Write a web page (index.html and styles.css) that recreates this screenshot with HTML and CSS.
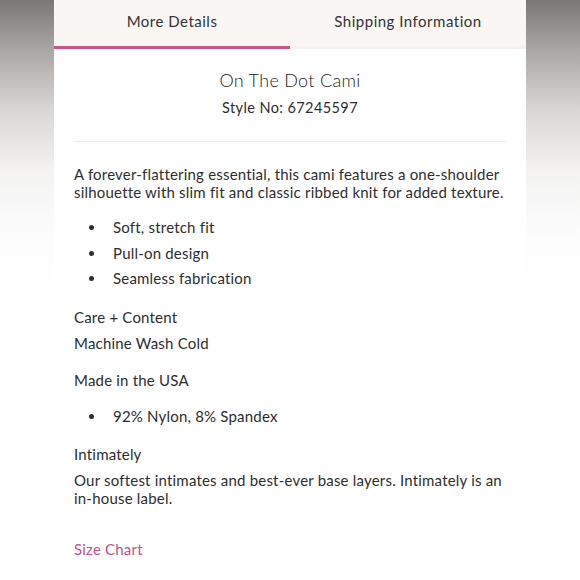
FILE: index.html
```html
<!doctype html>
<html lang="en">

<head>
  <meta charset="utf-8">
  <title>On The Dot Cami - Details</title>
  <meta name="viewport" content="width=device-width, initial-scale=1.0">
  <link rel="stylesheet" href="styles.css">
</head>

<body>
  <div class="panel">
    <div class="tabs">
      <div class="tab tab_active">More Details</div>
      <div class="tab">Shipping Information</div>
    </div>

    <div class="content">
      <div class="product_head">
        <h1 class="product_name">On The Dot Cami</h1>
        <div class="style_no">Style No: 67245597</div>
      </div>

      <p class="desc">A forever-flattering essential, this cami features a one-shoulder silhouette with slim fit and classic ribbed knit for added texture.</p>

      <ul class="bullets">
        <li>Soft, stretch fit</li>
        <li>Pull-on design</li>
        <li>Seamless fabrication</li>
      </ul>

      <div class="line">Care + Content</div>
      <div class="line">Machine Wash Cold</div>
      <div class="line line_gap">Made in the USA</div>
      <ul class="bullets bullets_gap">
        <li>92% Nylon, 8% Spandex</li>
      </ul>
      <div class="line line_gap">Intimately</div>
      <p class="desc desc_brand">Our softest intimates and best-ever base layers. Intimately is an in-house label.</p>

      <a class="size_chart" href="#">Size Chart</a>
    </div>
  </div>
</body>

</html>
```

FILE: styles.css
```css
html, body {
  margin: 0;
  padding: 0;
}

body {
  height: 580px;
  overflow: hidden;
  font-family: Lato, "Liberation Sans", sans-serif;
  color: #2e2e2e;
  background: linear-gradient(#7a7877 0, #a9a6a4 50px, #d9d7d5 110px, #f4f3f2 170px, #fdfdfd 240px, #fff 320px);
}

.panel {
  width: 472px;
  height: 580px;
  margin: 0 auto;
  background: white;
}

.tabs {
  display: flex;
  background-color: #faf6f3;
}

.tab {
  flex: 1;
  height: 46px;
  line-height: 42px;
  text-align: center;
  font-size: 15px;
  letter-spacing: 0.5px;
  color: #333;
  border-bottom: 3px solid #f6f1ee;
}

.tab_active {
  border-bottom-color: #c8568c;
}

.content {
  padding: 0 20px;
}

.product_head {
  text-align: center;
  padding-top: 19px;
  padding-bottom: 23px;
  border-bottom: 1px solid #efefef;
}

.product_name {
  margin: 0;
  font-size: 18px;
  font-weight: 300;
  line-height: 24px;
  letter-spacing: 0.3px;
  color: #1c1c1c;
}

.style_no {
  margin-top: 6px;
  font-size: 14.5px;
  line-height: 20px;
  letter-spacing: 0.4px;
}

.desc {
  margin: 24px 0 0;
  font-size: 15px;
  line-height: 17.5px;
  letter-spacing: 0.2px;
}

.desc_brand {
  margin-top: 5px;
}

.bullets {
  list-style: none;
  margin: 14px 0 12px;
  padding: 0;
}

.bullets li {
  display: flex;
  align-items: center;
  font-size: 15px;
  line-height: 25.5px;
  letter-spacing: 0.2px;
}

.bullets li::before {
  content: "";
  width: 5px;
  height: 5px;
  border-radius: 50%;
  background-color: #2e2e2e;
  margin-left: 14.5px;
  margin-right: 19.5px;
}

.bullets_gap {
  margin: 11px 0 0;
}

.line {
  font-size: 15px;
  line-height: 26px;
  letter-spacing: 0.2px;
}

.line_gap {
  margin-top: 11.5px;
}

.size_chart {
  display: block;
  margin-top: 29px;
  font-size: 15px;
  line-height: 26px;
  color: #c4538a;
  text-decoration: none;
  letter-spacing: 0.2px;
}
```
